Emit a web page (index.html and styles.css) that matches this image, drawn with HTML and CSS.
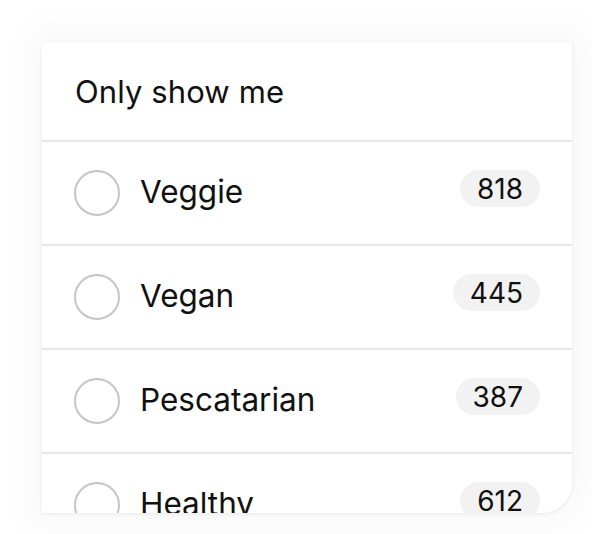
FILE: index.html
```html
<!DOCTYPE html>
<html>
<head>
<meta charset="utf-8">
<link rel="stylesheet" href="styles.css">
</head>
<body>
<div class="stage">
  <div class="card">
    <div class="header">Only show me</div>
    <ul class="list">
      <li class="row"><span class="radio"></span><span class="label">Veggie</span><span class="count">818</span></li>
      <li class="row"><span class="radio"></span><span class="label">Vegan</span><span class="count">445</span></li>
      <li class="row"><span class="radio"></span><span class="label">Pescatarian</span><span class="count">387</span></li>
      <li class="row"><span class="radio"></span><span class="label">Healthy</span><span class="count">612</span></li>
    </ul>
  </div>
</div>
</body>
</html>
```
FILE: styles.css
```css
html, body {
  margin: 0;
  padding: 0;
  background: #ffffff;
}
body {
  width: 592px;
  height: 534px;
  overflow: hidden;
  font-family: Inter, "Noto Sans", sans-serif;
  color: #111111;
}
.stage {
  padding: 42px 20px 0 42px;
}
.card {
  width: 530px;
  height: 471px;
  overflow: hidden;
  background: #ffffff;
  border-radius: 6px 0 30px 0;
  box-shadow: 0 1px 4px rgba(0, 0, 0, 0.07), 0 0 36px 16px rgba(0, 0, 0, 0.028);
}
.header {
  height: 98px;
  display: flex;
  align-items: center;
  padding-left: 33px;
  font-size: 31px;
  letter-spacing: 0.1px;
  border-bottom: 2px solid #e6e6eb;
}
.header span,
.header {
  padding-bottom: 0;
}
.list {
  list-style: none;
  margin: 0;
  padding: 0;
}
.row {
  height: 102px;
  display: flex;
  align-items: center;
  padding: 0 32px;
  border-bottom: 2px solid #e6e6eb;
}
.radio {
  box-sizing: border-box;
  width: 46px;
  height: 46px;
  border-radius: 50%;
  border: 2px solid #c4c4ca;
  flex: none;
}
.label {
  margin-left: 20px;
  font-size: 31.5px;
  flex: 1;
  margin-bottom: 4px;
}
.count {
  background: #f2f2f2;
  border-radius: 19px;
  height: 37px;
  padding: 0 17px;
  display: flex;
  align-items: center;
  font-size: 28px;
  margin-bottom: 9px;
}
```
